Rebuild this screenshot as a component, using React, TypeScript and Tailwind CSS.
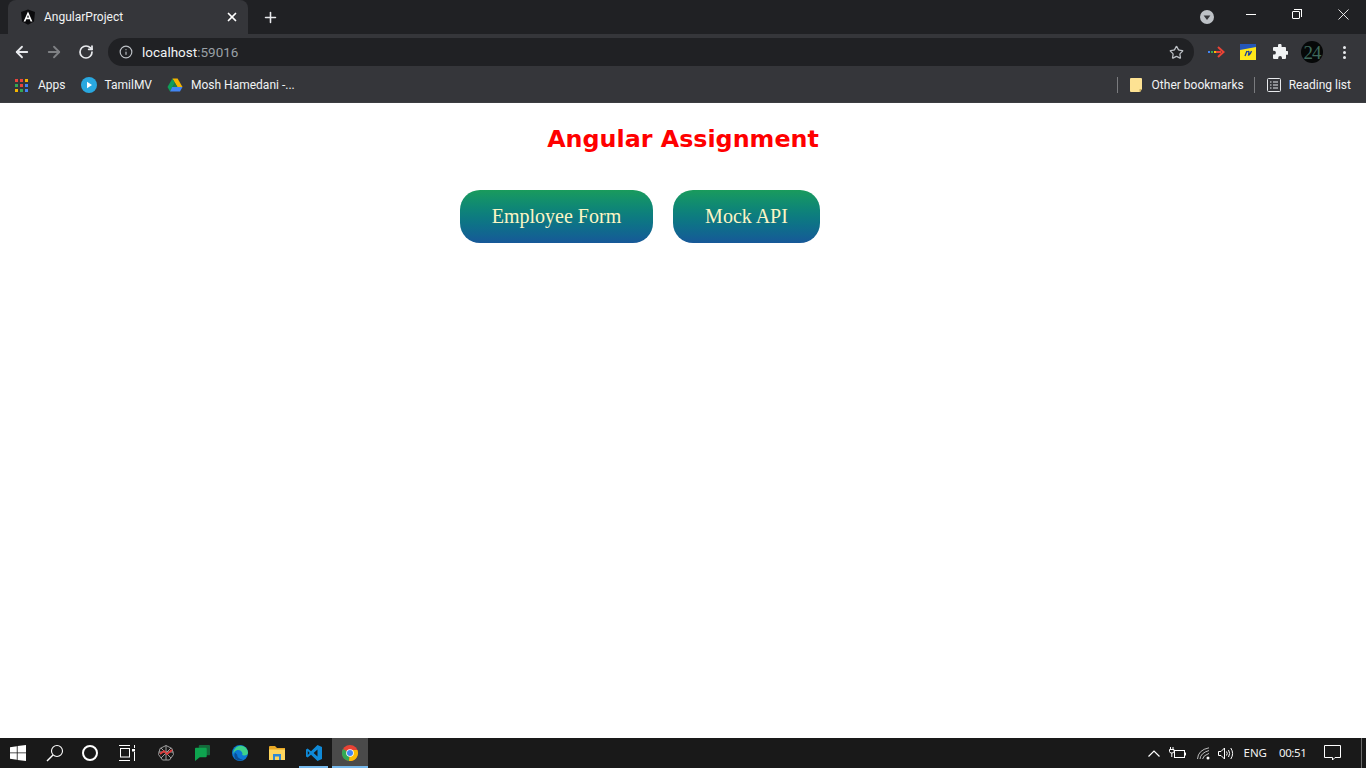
import { ArrowLeft, ArrowRight, Info, Plus, RotateCw, Star, X } from "lucide-react";

const AngularLogo = () => (
  <svg width="16" height="16" viewBox="0 0 16 16">
    <path d="M8 0.5 L15 3 L14 12.5 L8 15.8 L2 12.5 L1 3 Z" fill="#0b0b0d" />
    <path d="M8 2.6 L3.6 12.4 H5.4 L6.3 10.2 H9.7 L10.6 12.4 H12.4 Z M7 8.6 L8 6 L9 8.6 Z" fill="#fff" fillRule="evenodd" />
  </svg>
);

const AppsIcon = () => {
  const colors = ["#e8453c", "#e8453c", "#f4b400", "#34a853", "#e8453c", "#4285f4", "#f4b400", "#34a853", "#4285f4"];
  return (
    <div className="grid grid-cols-3 gap-[2px] w-[13px]">
      {colors.map((c, i) => (
        <div key={i} className="w-[3px] h-[3px]" style={{ backgroundColor: c }} />
      ))}
    </div>
  );
};

const TamilIcon = () => (
  <svg width="16" height="16" viewBox="0 0 16 16">
    <circle cx="8" cy="8" r="8" fill="#29a8e0" />
    <path d="M6 4.8 L11 8 L6 11.2 Z" fill="#fff" />
  </svg>
);

const DriveIcon = () => (
  <svg width="16" height="14" viewBox="0 0 16 14">
    <path d="M5.4 0.5 H10.6 L15.5 9 H10.4 Z" fill="#f4b400" />
    <path d="M5.4 0.5 L8 5 L3 13.5 L0.5 9 Z" fill="#0f9d58" />
    <path d="M5.2 9 H15.5 L13 13.5 H3 Z" fill="#4285f4" />
    <path d="M5.4 9 H10.4 L8 5 Z" fill="#1a7f4b" />
  </svg>
);

const ProfileDropdown = () => (
  <svg width="14" height="14" viewBox="0 0 14 14">
    <circle cx="7" cy="7" r="7" fill="#bdc1c6" />
    <path d="M3.6 5.4 H10.4 L7 10 Z" fill="#35363a" />
  </svg>
);

const ArrowExtension = () => (
  <svg width="17" height="12" viewBox="0 0 17 12">
    <rect x="0" y="5" width="2" height="2" fill="#4285f4" />
    <rect x="3" y="5" width="2" height="2" fill="#34a853" />
    <rect x="6" y="5" width="2" height="2" fill="#fbbc05" />
    <path d="M8 5 H13 V7 H8 Z" fill="#ea4335" />
    <path d="M10 1 L15.5 6 L10 11" fill="none" stroke="#ea4335" strokeWidth="2" />
  </svg>
);

const YellowExtension = () => (
  <svg width="16" height="16" viewBox="0 0 16 16">
    <rect width="16" height="16" fill="#ffe81a" />
    <path d="M0 0 H16 V3 L0 6 Z" fill="#2456b8" />
    <path d="M5 12 L7 7 M7.5 8 Q9 6.5 9 8.5 L8.5 11 Q10 11 11.5 7" fill="none" stroke="#1c3f9c" strokeWidth="1.3" />
  </svg>
);

const PuzzleSolid = () => (
  <svg width="16" height="16" viewBox="0 0 16 16" fill="#f1f3f4">
    <path d="M6 1.6 A1.8 1.8 0 0 1 9.6 1.6 V3 H13 Q14 3 14 4 V7 H15 A1.9 1.9 0 0 1 15 10.8 H14 V14 Q14 15 13 15 H10 V14 A1.9 1.9 0 0 0 6.2 14 V15 H2 Q1 15 1 14 V10.6 H2 A1.9 1.9 0 0 0 2 6.8 H1 V4 Q1 3 2 3 H6 Z" />
  </svg>
);

const BookmarkFolder = () => (
  <svg width="12" height="14" viewBox="0 0 12 14">
    <path d="M0 1 Q0 0 1 0 H11 Q12 0 12 1 V11 L10 14 H1 Q0 14 0 13 Z" fill="#fde293" />
    <path d="M9.5 11 H12 L10 14 H9.5 Z" fill="#c9ad5e" />
  </svg>
);

const ReadingIcon = () => (
  <svg width="14" height="14" viewBox="0 0 14 14" fill="none" stroke="#e8eaed">
    <rect x="0.5" y="0.5" width="13" height="13" rx="1" />
    <path d="M3 4 H4.5 M6 4 H11 M3 7 H4.5 M6 7 H11 M3 10 H4.5 M6 10 H11" strokeWidth="1.2" />
  </svg>
);

const WindowsLogo = () => (
  <svg width="16" height="16" viewBox="0 0 16 16" fill="#fff">
    <path d="M0 2.2 L6.8 1.2 V7.5 H0 Z M7.6 1.1 L16 0 V7.5 H7.6 Z M0 8.3 H6.8 V14.8 L0 13.8 Z M7.6 8.3 H16 V16 L7.6 14.9 Z" />
  </svg>
);

const SearchIcon = () => (
  <svg width="18" height="18" viewBox="0 0 18 18" fill="none" stroke="#fff" strokeWidth="1.1">
    <circle cx="11" cy="7" r="5.5" />
    <path d="M7 11 L1 17" strokeWidth="1.4" />
  </svg>
);

const CortanaIcon = () => <div className="w-[16px] h-[16px] rounded-full border-2 border-white" />;

const TaskViewIcon = () => (
  <svg width="17" height="16" viewBox="0 0 17 16" fill="none" stroke="#fff">
    <path d="M0 0.5 H11 M0 15.5 H11" />
    <rect x="1.5" y="3.5" width="9" height="8.5" />
    <path d="M15.5 0 V3 M15.5 7 V16" />
    <rect x="13" y="4" width="3" height="2.5" fill="#fff" stroke="none" />
  </svg>
);

const SpiderIcon = () => (
  <svg width="16" height="16" viewBox="0 0 16 16" fill="none">
    <path d="M8 0.5 L14 3.5 L15.5 9.5 L11.5 15 H4.5 L0.5 9.5 L2 3.5 Z M8 0.5 V15 M0.5 7 L15.5 7 M3 13 L13 3 M3 3 L13 13" stroke="#9d9d9d" strokeWidth="1" />
    <path d="M2 9 L6 6 L9 9 L14 5" stroke="#e23a3a" strokeWidth="1.7" />
  </svg>
);

const ChatIcon = () => (
  <svg width="15" height="16" viewBox="0 0 16 17">
    <rect x="4" y="0" width="12" height="11" rx="1" fill="#14693a" />
    <path d="M0 4 Q0 3 1 3 H11.5 Q12.5 3 12.5 4 V12 Q12.5 13 11.5 13 H5 L0 17 Z" fill="#0ea44f" />
  </svg>
);

const EdgeIcon = () => (
  <svg width="16" height="16" viewBox="0 0 16 16">
    <circle cx="8" cy="8" r="8" fill="#0c78d4" />
    <path d="M1.5 6 Q4 0.5 9.5 0.8 Q15 1.4 16 7.5 Q16 10.5 12 10.5 Q9.5 10.5 10.5 8.3 Q9 4.5 5.5 5 Q2.5 5.6 1.5 9 Z" fill="#3dd28a" />
    <path d="M5 9.5 Q5.5 14 11 14.5 Q7 16.5 3.5 14 Q1.5 11 3 7.5 Z" fill="#0a4f96" />
  </svg>
);

const ExplorerIcon = () => (
  <svg width="16" height="14" viewBox="0 0 16 14">
    <path d="M0 1 Q0 0 1 0 H6 L8 2 H16 V13 Q16 14 15 14 H1 Q0 14 0 13 Z" fill="#e9a825" />
    <rect x="0" y="3.5" width="16" height="10.5" fill="#fdd55e" />
    <path d="M4 14 V8 H12 V14 H10 V10.5 H6 V14 Z" fill="#2f88d4" />
  </svg>
);

const VscodeIcon = () => (
  <svg width="16" height="16" viewBox="0 0 16 16">
    <path d="M11.5 0 L16 2 V14 L11.5 16 L5 9.8 L1.6 12.5 L0 11.6 V4.4 L1.6 3.5 L5 6.2 Z M11.5 4.4 L7.6 8 L11.5 11.6 Z M1.8 6 V10 L3.6 8 Z" fill="#0f8ad8" fillRule="evenodd" />
  </svg>
);

const ChromeIcon = () => (
  <svg width="16" height="16" viewBox="0 0 16 16">
    <circle cx="8" cy="8" r="8" fill="#ea4335" />
    <path d="M8 8 L1 4 A8 8 0 0 0 7 16 Z" fill="#34a853" />
    <path d="M8 5 H15.4 A8 8 0 0 1 7 16 L8 8 Z" fill="#fbbc05" />
    <circle cx="8" cy="8" r="3.8" fill="#fff" />
    <circle cx="8" cy="8" r="3" fill="#4285f4" />
  </svg>
);

const TrayBattery = () => (
  <svg width="17" height="12" viewBox="0 0 17 12" fill="none" stroke="#fff">
    <rect x="5.5" y="3.5" width="10" height="7" />
    <path d="M16.5 5.5 V8.5" />
    <path d="M1.5 0 V2 M4 0 V2 M0.5 2.5 H5 V4.5 Q5 6 2.8 6 Q0.5 6 0.5 4.5 Z M2.8 6 V10" />
  </svg>
);

const TrayWifi = () => (
  <svg width="14" height="13" viewBox="0 0 14 13" fill="none" stroke="#bdbdbd">
    <path d="M0.5 12 Q1 3 12 0.8 M3 12 Q3.5 6 12 3.5 M5.6 12 Q6 8.6 12 6.4" />
    <circle cx="11" cy="11" r="1.5" fill="#fff" stroke="none" />
  </svg>
);

const TrayVolume = () => (
  <svg width="16" height="13" viewBox="0 0 16 13" fill="none" stroke="#fff">
    <path d="M0.5 4.5 H3 L6.5 1 V12 L3 8.5 H0.5 Z" />
    <path d="M8.5 4.5 Q10 6.5 8.5 8.5 M10.5 3 Q12.8 6.5 10.5 10 M12.8 1 Q16.4 6.5 12.8 12" />
  </svg>
);

const NotificationIcon = () => (
  <svg width="17" height="16" viewBox="0 0 17 16" fill="none" stroke="#fff">
    <path d="M0.5 0.5 H16.5 V12.5 H11 L8.5 15 V12.5 H0.5 Z" />
  </svg>
);

const taskbarApps = [
  { icon: <SpiderIcon />, pinned: false },
  { icon: <ChatIcon />, pinned: false },
  { icon: <EdgeIcon />, pinned: false },
  { icon: <ExplorerIcon />, pinned: false },
  { icon: <VscodeIcon />, pinned: true },
];

const BrowserChrome = () => (
  <header className="h-[103px] shrink-0 bg-[#35363a] text-white font-['Roboto',sans-serif]">
    <div className="h-[34px] bg-[#202124] flex items-stretch pl-[8px]">
      <div className="w-[240px] bg-[#35363a] rounded-t-[8px] flex items-center pl-[12px] pr-[9px]">
        <AngularLogo />
        <span className="ml-[8px] text-[12px] text-[#f1f3f4]">AngularProject</span>
        <X className="ml-auto w-[14px] h-[14px] text-white" strokeWidth={3} />
      </div>
      <div className="w-[44px] flex items-center justify-center">
        <Plus className="w-[17px] h-[17px] text-[#e8eaed]" strokeWidth={2.2} />
      </div>
      <div className="ml-auto flex items-stretch">
        <div className="w-[46px] flex items-center justify-center pl-[4px]">
          <ProfileDropdown />
        </div>
        <div className="w-[46px] flex items-center justify-center pb-[6px]">
          <div className="w-[10px] h-px bg-white" />
        </div>
        <div className="w-[46px] flex items-center justify-center pb-[6px]">
          <div className="relative w-[8px] h-[8px] mt-[2px] mr-[2px] border border-white rounded-[1px]">
            <div className="absolute top-[-3px] left-[1px] w-[8px] h-[8px] border-t border-r border-white" />
          </div>
        </div>
        <div className="w-[46px] flex items-center justify-center pb-[6px]">
          <X className="w-[19px] h-[19px] text-white" strokeWidth={1.1} />
        </div>
      </div>
    </div>
    <div className="h-[34px] flex items-center pt-[2px]">
      <div className="flex items-center w-[108px] pl-[6px]">
        <div className="w-[32px] flex justify-center"><ArrowLeft className="w-[18px] h-[18px] text-[#e8eaed]" strokeWidth={2.4} /></div>
        <div className="w-[32px] flex justify-center"><ArrowRight className="w-[18px] h-[18px] text-[#7f8184]" strokeWidth={2.4} /></div>
        <div className="w-[32px] flex justify-center"><RotateCw className="w-[16px] h-[16px] text-[#e8eaed]" strokeWidth={2.6} /></div>
      </div>
      <div className="w-[1086px] h-[28px] rounded-full bg-[#202124] flex items-center pl-[11px] pr-[10px]">
        <Info className="w-[14px] h-[14px] text-[#bdc1c6]" strokeWidth={2} />
        <span className="ml-[9px] text-[13.5px] text-[#f1f3f4]">
          localhost<span className="text-[#9aa0a6]">:59016</span>
        </span>
        <Star className="ml-auto w-[15px] h-[15px] text-[#bdc1c6]" strokeWidth={2} />
      </div>
      <div className="flex-1 flex items-center pl-[14px]">
        <ArrowExtension />
        <div className="ml-[15px] flex"><YellowExtension /></div>
        <div className="ml-[16px] flex"><PuzzleSolid /></div>
        <div className="ml-[13px] w-[22px] h-[22px] rounded-full bg-[#060808] flex items-center justify-center text-[19px] leading-none tracking-[-1px] text-[#3f6a5c] font-['Liberation_Serif',serif]">24</div>
        <div className="ml-[20px] flex flex-col gap-[2px]">
          <div className="w-[3px] h-[3px] rounded-full bg-[#e8eaed]" />
          <div className="w-[3px] h-[3px] rounded-full bg-[#e8eaed]" />
          <div className="w-[3px] h-[3px] rounded-full bg-[#e8eaed]" />
        </div>
      </div>
    </div>
    <div className="h-[35px] flex items-center text-[12px] text-[#f1f3f4] border-b border-[#3c3d41]">
      <div className="flex items-center pl-[15px]">
        <AppsIcon />
        <span className="ml-[10px]">Apps</span>
        <div className="ml-[15px] flex"><TamilIcon /></div>
        <span className="ml-[8px]">TamilMV</span>
        <div className="ml-[15px] flex"><DriveIcon /></div>
        <span className="ml-[8px]">Mosh Hamedani -...</span>
      </div>
      <div className="ml-auto flex items-center pr-[15px]">
        <div className="w-px h-[16px] bg-[#7a7b7e]" />
        <div className="ml-[12px] flex"><BookmarkFolder /></div>
        <span className="ml-[10px]">Other bookmarks</span>
        <div className="ml-[10px] w-px h-[16px] bg-[#7a7b7e]" />
        <div className="ml-[12px] flex"><ReadingIcon /></div>
        <span className="ml-[8px]">Reading list</span>
      </div>
    </div>
  </header>
);

const Taskbar = () => (
  <footer className="h-[30px] shrink-0 bg-[#191919] flex items-stretch text-white text-[12px] font-['Noto_Sans',sans-serif]">
    <div className="w-[36px] flex items-center justify-center"><WindowsLogo /></div>
    <div className="w-[37px] flex items-center justify-center"><SearchIcon /></div>
    <div className="w-[36px] flex items-center justify-center pr-[2px]"><CortanaIcon /></div>
    <div className="w-[37px] flex items-center justify-center"><TaskViewIcon /></div>
    <div className="flex ml-[1px]">
      {taskbarApps.map((app, i) => (
        <div key={i} className="w-[37px] flex items-center justify-center relative">
          {app.icon}
          {app.pinned && <div className="absolute bottom-0 left-[4px] right-[4px] h-[2px] bg-[#76b9ed]" />}
        </div>
      ))}
      <div className="w-[36px] bg-[#4a4a4a] flex items-center justify-center relative">
        <ChromeIcon />
        <div className="absolute bottom-0 inset-x-0 h-[2px] bg-[#76b9ed]" />
      </div>
    </div>
    <div className="ml-auto flex items-center">
      <svg width="12" height="7" viewBox="0 0 12 7" fill="none" stroke="#fff" strokeWidth="1.2">
        <path d="M0.5 6.5 L6 1 L11.5 6.5" />
      </svg>
      <div className="ml-[9px] flex"><TrayBattery /></div>
      <div className="ml-[11px] flex"><TrayWifi /></div>
      <div className="ml-[7px] flex"><TrayVolume /></div>
      <span className="ml-[9px] text-[#f2f2f2] text-[11.5px]">ENG</span>
      <span className="ml-[12px] text-[#f2f2f2] text-[11.5px] w-[27px] tracking-[-0.4px]">00:51</span>
      <div className="ml-[18px] flex"><NotificationIcon /></div>
      <div className="ml-[20px] w-[5px] h-full border-l border-[#6b6b6b]" />
    </div>
  </footer>
);

export default function App() {
  return (
    <div className="h-screen w-full flex flex-col bg-white overflow-hidden">
      <BrowserChrome />
      <main className="flex-1">
        <h1 className="mt-[19px] text-center text-[23.8px] leading-[35px] font-bold text-[#ff0000] font-['DejaVu_Sans',sans-serif]">
          Angular Assignment
        </h1>
        <div className="mt-[33px] ml-[460px] flex gap-[20px] font-['Liberation_Serif',serif] text-[20px] text-[#fcf5c4]">
          <button className="w-[193px] h-[53px] pb-[1px] rounded-[20px] bg-gradient-to-b from-[#1a9b5c] to-[#175898]">Employee Form</button>
          <button className="w-[147px] h-[53px] pb-[1px] rounded-[20px] bg-gradient-to-b from-[#1a9b5c] to-[#175898]">Mock API</button>
        </div>
      </main>
      <Taskbar />
    </div>
  );
}
